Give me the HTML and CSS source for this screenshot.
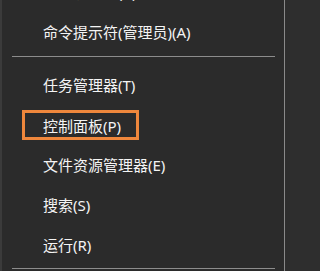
FILE: index.html
```html
<!DOCTYPE html>
<html lang="zh-CN">
<head>
<meta charset="utf-8">
<title>Menu</title>
<link rel="stylesheet" href="styles.css">
</head>
<body>
<div class="menu">
  <ul class="list">
    <li class="item">命令提示符(C)</li>
    <li class="item">命令提示符(管理员)(A)</li>
    <li class="sep"></li>
    <li class="item">任务管理器(T)</li>
    <li class="item item--hl"><span class="box">控制面板(P)</span></li>
    <li class="item">文件资源管理器(E)</li>
    <li class="item">搜索(S)</li>
    <li class="item">运行(R)</li>
    <li class="sep sep--end"></li>
  </ul>
</div>
</body>
</html>
```
FILE: styles.css
```css
html, body {
  margin: 0;
  padding: 0;
  background: #2e2e2e;
}
.menu {
  width: 282px;
  height: 271px;
  overflow: hidden;
  background: #2b2b2b;
  border-left: 2px solid #3b3b3b;
  border-right: 1px solid #8a8a8a;
  font-family: "Noto Sans", "Noto Sans CJK SC", sans-serif;
  font-size: 15px;
  color: #f4f4f4;
}
.list {
  list-style: none;
  margin: -29px 0 0;
  padding: 0;
}
.item {
  height: 40px;
  display: flex;
  align-items: center;
  padding-left: 41px;
  white-space: nowrap;
}
.item--hl {
  padding-left: 20px;
}
.box {
  box-sizing: border-box;
  width: 117px;
  height: 30px;
  border: 3px solid #ef873c;
  padding-left: 18px;
  display: flex;
  align-items: center;
  margin-top: 2px;
}
.sep {
  padding: 5px 0 7px 10px;
}
.sep::before {
  content: "";
  display: block;
  width: 263px;
  height: 1px;
  background: #8c8c8c;
}
.sep--end {
  padding-top: 4px;
}
```
